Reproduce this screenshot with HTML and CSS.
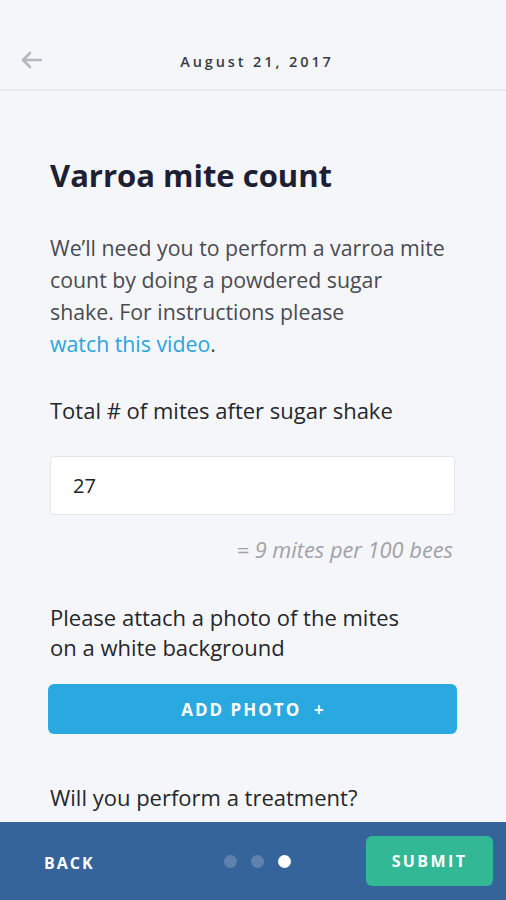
FILE: index.html
```html
<!DOCTYPE html>
<html>
<head>
<meta charset="utf-8">
<link rel="stylesheet" href="styles.css">
</head>
<body>
<div class="screen">
  <header class="topbar">
    <svg class="back-arrow" width="22" height="18" viewBox="0 0 22 18">
      <path d="M21 9H3M10 2L3 9l7 7" fill="none" stroke="#b4b7bd" stroke-width="2.6" stroke-linecap="round" stroke-linejoin="round"/>
    </svg>
    <div class="date">August 21, 2017</div>
  </header>
  <main class="content">
    <h1 class="title">Varroa mite count</h1>
    <p class="intro">We’ll need you to perform a varroa mite count by doing a powdered sugar shake. For instructions please <span class="nowrap"><a class="link">watch this video</a>.</span></p>
    <div class="label">Total # of mites after sugar shake</div>
    <div class="input">27</div>
    <div class="hint">= 9 mites per 100 bees</div>
    <div class="label photo-label">Please attach a photo of the mites<br>on a white background</div>
    <div class="add-photo">ADD PHOTO &nbsp;+</div>
    <div class="label treat-label">Will you perform a treatment?</div>
  </main>
  <footer class="footer">
    <div class="back">BACK</div>
    <div class="dots"><span class="dot"></span><span class="dot"></span><span class="dot active"></span></div>
    <div class="submit">SUBMIT</div>
  </footer>
</div>
</body>
</html>
```
FILE: styles.css
```css
html, body {
  margin: 0;
  padding: 0;
}
body {
  background: #f5f6fa;
  font-family: "Open Sans", "Noto Sans", sans-serif;
}
.screen {
  width: 506px;
  height: 900px;
  position: relative;
  overflow: hidden;
  display: flex;
  flex-direction: column;
}
.topbar {
  height: 91px;
  border-bottom: 2px solid #e8e9ee;
  position: relative;
  display: flex;
  align-items: center;
  justify-content: center;
  padding-top: 34px;
  box-sizing: border-box;
  flex: none;
}
.back-arrow {
  position: absolute;
  left: 20px;
  top: 51px;
}
.date {
  font-size: 14.5px;
  font-weight: 600;
  letter-spacing: 2.9px;
  color: #3a3c42;
  margin-left: 8px;
}
.content {
  flex: 1;
  padding: 0 51px 0 50px;
  overflow: hidden;
}
.title {
  margin: 62px 0 0 0;
  font-size: 31px;
  font-weight: 700;
  color: #1d2033;
  line-height: 44px;
}
.intro {
  margin: 35px 0 0 0;
  max-width: 398px;
  font-size: 21.3px;
  line-height: 32px;
  color: #4a4b50;
}
.nowrap {
  white-space: nowrap;
}
.link {
  color: #2ba4dd;
}
.label {
  font-size: 22px;
  color: #26272b;
  line-height: 30px;
  margin-top: 35px;
}
.input {
  margin-top: 31px;
  height: 59px;
  background: #fff;
  border: 1px solid #e4e6eb;
  border-radius: 4px;
  box-sizing: border-box;
  display: flex;
  align-items: center;
  padding-left: 22px;
  font-size: 20px;
  color: #222;
}
.hint {
  margin-top: 21px;
  margin-right: 2px;
  text-align: right;
  font-style: italic;
  font-size: 21.8px;
  color: #a0a2a7;
  line-height: 28px;
}
.photo-label {
  margin-top: 38px;
}
.add-photo {
  margin: 22px -2px 0 -2px;
  height: 50px;
  background: #2aa8e0;
  border-radius: 6px;
  color: #fff;
  font-weight: 700;
  font-size: 17px;
  letter-spacing: 2px;
  display: flex;
  align-items: center;
  justify-content: center;
  padding-left: 2px;
}
.treat-label {
  margin-top: 48px;
}
.footer {
  flex: none;
  height: 78px;
  background: #34649a;
  display: flex;
  align-items: center;
  justify-content: space-between;
  padding: 0 13px 0 44px;
}
.back {
  color: #fff;
  font-weight: 700;
  font-size: 16px;
  letter-spacing: 2px;
  padding-top: 4px;
}
.dots {
  display: flex;
  gap: 14px;
  margin-left: 54px;
}
.dot {
  width: 13px;
  height: 13px;
  border-radius: 50%;
  background: #5f82ad;
}
.dot.active {
  background: #fff;
}
.submit {
  width: 127px;
  height: 50px;
  background: #33b896;
  border-radius: 6px;
  color: #fff;
  font-weight: 700;
  font-size: 16px;
  letter-spacing: 2.4px;
  display: flex;
  align-items: center;
  justify-content: center;
}
```
